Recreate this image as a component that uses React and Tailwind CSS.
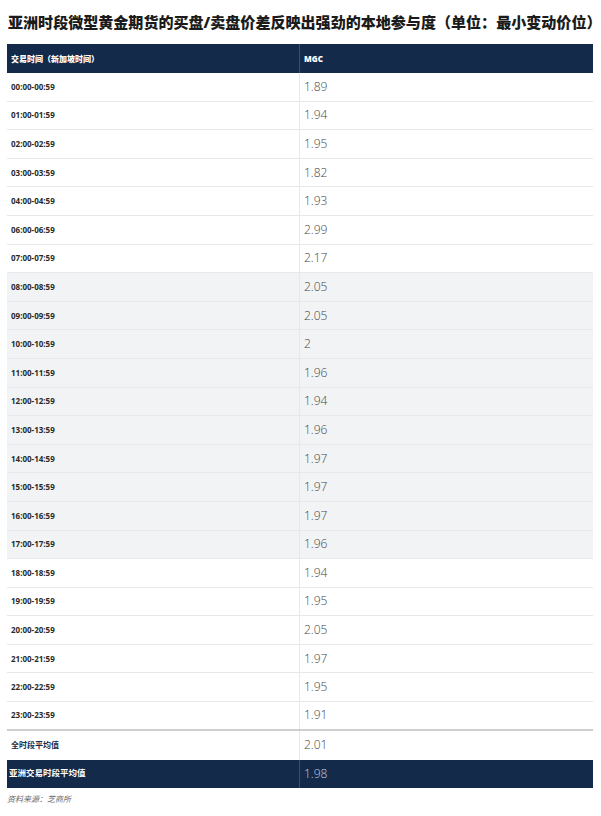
const rows = [
  ['00:00-00:59', '1.89'],
  ['01:00-01:59', '1.94'],
  ['02:00-02:59', '1.95'],
  ['03:00-03:59', '1.82'],
  ['04:00-04:59', '1.93'],
  ['06:00-06:59', '2.99'],
  ['07:00-07:59', '2.17'],
  ['08:00-08:59', '2.05', true],
  ['09:00-09:59', '2.05', true],
  ['10:00-10:59', '2', true],
  ['11:00-11:59', '1.96', true],
  ['12:00-12:59', '1.94', true],
  ['13:00-13:59', '1.96', true],
  ['14:00-14:59', '1.97', true],
  ['15:00-15:59', '1.97', true],
  ['16:00-16:59', '1.97', true],
  ['17:00-17:59', '1.96', true],
  ['18:00-18:59', '1.94'],
  ['19:00-19:59', '1.95'],
  ['20:00-20:59', '2.05'],
  ['21:00-21:59', '1.97'],
  ['22:00-22:59', '1.95'],
  ['23:00-23:59', '1.91'],
];

const cjk = { fontFamily: '"Open Sans", "Noto Sans CJK SC", sans-serif' };

export default function App() {
  return (
    <div className="w-[601px] h-[816px] bg-white" style={cjk}>
      <h1 className="pl-[8px] pt-[10px] h-[44px] text-[15.05px] leading-[24px] font-black text-[#1b1b1b] whitespace-nowrap">
        亚洲时段微型黄金期货的买盘/卖盘价差反映出强劲的本地参与度（单位：最小变动价位）
      </h1>

      <div className="ml-[7px] w-[586px]">
        <div className="grid grid-cols-2 h-[29px] bg-[#142a4b] text-white text-[8px] font-extrabold">
          <div className="flex items-center pl-[4px] border-r border-[#3b4f6e]">交易时间（新加坡时间）</div>
          <div className="flex items-center pl-[4px]">MGC</div>
        </div>

        {rows.map(([t, v, shade], i) => (
          <div
            key={t}
            className={`grid grid-cols-2 h-[28.6px] border-b ${
              i === rows.length - 1 ? 'border-b-2 border-[#cfcfcf]' : 'border-[#e6e8eb]'
            } ${shade ? 'bg-[#f1f3f5]' : 'bg-white'}`}
          >
            <div className="flex items-center pl-[4px] text-[8px] font-bold text-[#2a2a2a] border-r border-[#e6e8eb]">
              {t}
            </div>
            <div className="flex items-center pl-[4px] text-[12px] font-light text-[#444]">{v}</div>
          </div>
        ))}

        <div className="grid grid-cols-2 h-[29px] bg-white">
          <div className="flex items-center pl-[4px] text-[8px] font-bold text-[#142a4b] border-r border-[#e6e8eb]">
            全时段平均值
          </div>
          <div className="flex items-center pl-[4px] text-[12px] font-light text-[#444]">2.01</div>
        </div>

        <div className="grid grid-cols-2 h-[28px] bg-[#142a4b]">
          <div className="flex items-center pl-[2px] text-[8.5px] font-bold text-white border-r border-[#3b4f6e]">
            亚洲交易时段平均值
          </div>
          <div className="flex items-center pl-[4px] text-[12px] font-light text-[#c6cfdb]">1.98</div>
        </div>
      </div>

      <p className="pl-[7px] pt-[5px] text-[8px] italic text-[#6b6b6b]">资料来源：芝商所</p>
    </div>
  );
}
